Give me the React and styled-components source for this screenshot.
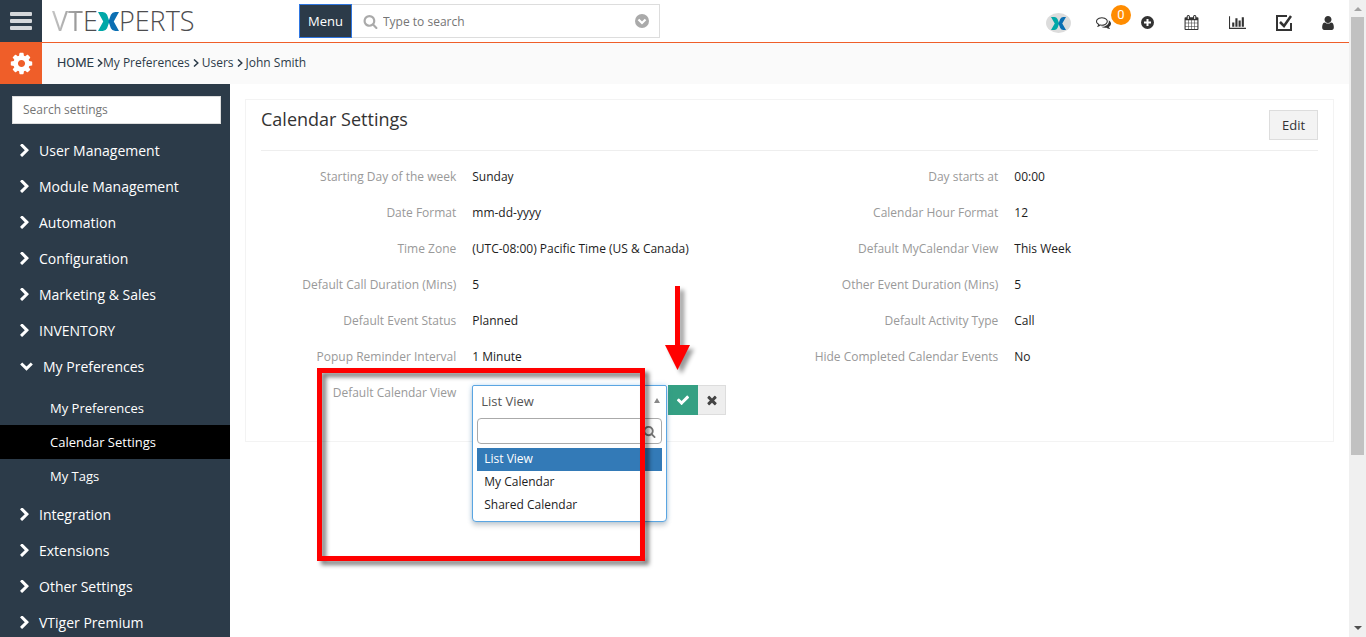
import React, { useState } from 'react';
import styled, { createGlobalStyle } from 'styled-components';

const GlobalStyle = createGlobalStyle`
  * {
    box-sizing: border-box;
  }

  body {
    margin: 0;
    background: #fff;
    color: #2c3b49;
    font-family: 'Open Sans', 'Noto Sans', sans-serif;
    font-size: 13px;
    line-height: 20px;
  }

  button, input, select {
    font-family: inherit;
    margin: 0;
  }
`;

const Page = styled.div`
  display: flex;
  height: 100vh;
  overflow: hidden;
`;

const Main = styled.div`
  display: flex;
  flex-direction: column;
  flex: 1;
  min-width: 0;
`;

const TopBar = styled.header`
  display: flex;
  height: 42px;
  flex-shrink: 0;
`;

const SquareButton = styled.button`
  display: flex;
  align-items: center;
  justify-content: center;
  width: 42px;
  padding: 0;
  border: none;
  flex-shrink: 0;
  background: ${props => props.$orange ? '#ef5e29' : '#2c3b49'};
  color: ${props => props.$orange ? '#fff' : '#d5d8db'};
  cursor: pointer;
`;

const Brand = styled.a`
  display: flex;
  align-items: center;
  width: 257px;
  padding-left: 10px;
  color: #4d4d4f;
  font-size: 27px;
  font-weight: 300;
  text-decoration: none;
`;

const BrandFade = styled.span`
  background: linear-gradient(90deg, #c4c4c4, #8f8f8f);
  background-clip: text;
  color: transparent;
  font-weight: 400;
`;

const MenuButton = styled.button`
  width: 53px;
  height: 34px;
  margin-top: 4px;
  padding: 0;
  border: 1px solid #2f76e0;
  background: #2c3b49;
  color: #fff;
  font-size: 13px;
  font-weight: 500;
  cursor: pointer;
`;

const GlobalSearch = styled.label`
  display: flex;
  align-items: center;
  gap: 5px;
  width: 308px;
  height: 34px;
  margin-top: 4px;
  padding: 0 10px 0 11px;
  border: 1px solid #ddd;
  border-left: none;
  color: #aaa;

  input {
    flex: 1;
    min-width: 0;
    padding: 0;
    border: none;
    outline: none;
    font-size: 12px;
  }
`;

const Tools = styled.nav`
  display: flex;
  align-items: center;
  margin-left: auto;
`;

const ToolButton = styled.button`
  position: relative;
  display: flex;
  padding: 3px ${props => props.$tight ? '10px' : '15px'} 0 15px;
  border: none;
  background: none;
  color: #333;
  cursor: pointer;
`;

const Badge = styled.span`
  position: absolute;
  top: -7px;
  right: -5px;
  width: 20px;
  height: 20px;
  border-radius: 50%;
  background: #ff8c00;
  color: #fff;
  font-family: Roboto, sans-serif;
  font-size: 13px;
  line-height: 20px;
  text-align: center;
`;

const CrumbBar = styled.div`
  display: flex;
  height: 42px;
  flex-shrink: 0;
`;

const Crumbs = styled.nav`
  display: flex;
  align-items: center;
  flex: 1;
  padding: 0 15px 2px;
  border-top: 1px solid #ef5e29;
  background: #fafafa;
  font-size: 12px;

  a {
    color: #2c3b49;
    text-decoration: none;
  }

  svg {
    margin: 0 3px;
  }

  svg:first-of-type {
    margin: 0;
  }
`;

const HomeLink = styled.a`
  margin-right: 3px;
  font-family: 'Liberation Sans Narrow', Roboto, sans-serif;
  font-size: 13px;
`;

const Body = styled.div`
  display: flex;
  flex: 1;
  min-height: 0;
`;

const Sidebar = styled.aside`
  width: 230px;
  flex-shrink: 0;
  padding-top: 12px;
  background: #2c3b49;
  overflow: hidden;
`;

const SettingsSearch = styled.input`
  display: block;
  width: 209px;
  height: 28px;
  margin: 0 0 8px 12px;
  padding: 0 10px 2px;
  border: 1px solid #ddd;
  background: #fff;
  font-size: 12px;
`;

const MenuItem = styled.button`
  display: flex;
  align-items: center;
  gap: 10px;
  width: 100%;
  height: 36px;
  padding: 0 20px;
  border: none;
  background: none;
  color: #fff;
  font-size: 14px;
  text-align: left;
  cursor: pointer;
`;

const SubMenu = styled.div`
  padding: 7px 0 3px;
`;

const SubItem = styled.a`
  display: block;
  padding: 0 50px;
  background: ${props => props.$active ? '#000' : 'transparent'};
  color: #fff;
  line-height: 34px;
  text-decoration: none;
`;

const Content = styled.main`
  flex: 1;
  min-width: 0;
  padding: 15px;
`;

const Panel = styled.section`
  padding: 10px 15px 26px;
  border: 1px solid #f3f3f3;
`;

const PanelHeader = styled.div`
  display: flex;
  align-items: flex-start;
  justify-content: space-between;
  padding-bottom: 10px;
  border-bottom: 1px solid #eee;
`;

const Title = styled.h1`
  margin: 0;
  color: #333;
  font-size: 18px;
  font-weight: 400;
  line-height: 18px;
`;

const EditButton = styled.button`
  width: 49px;
  height: 30px;
  padding: 0;
  border: 1px solid #ddd;
  background: #f3f3f3;
  color: #333;
  font-size: 13px;
  cursor: pointer;
`;

const Fields = styled.div`
  display: grid;
  grid-template-columns: 15fr 25fr 15fr 23fr;
  padding-top: 8px;
`;

const FieldLabel = styled.label`
  padding: 8px;
  color: #999;
  font-size: 12px;
  text-align: right;
`;

const FieldValue = styled.div`
  padding: 8px;
  color: #1d1d1d;
  font-size: 12px;
`;

const EditCell = styled.div`
  padding: 10px 8px 0;
`;

const Editor = styled.div`
  position: relative;
  display: flex;
  height: 30px;
`;

const SelectWrap = styled.div`
  position: relative;
  width: 196px;
`;

const Picker = styled.div`
  position: absolute;
  top: 0;
  left: 0;
  width: 195px;
  padding-bottom: 4px;
  border: 1px solid #5aa5e2;
  border-radius: 2px 2px 4px 4px;
  background: #fff;
  box-shadow: 0 4px 5px rgba(0, 0, 0, 0.15), 0 0 5px rgba(90, 165, 226, 0.4);
`;

const PickerSelect = styled.select`
  display: block;
  width: 100%;
  height: 30px;
  padding: 0 8px;
  border: none;
  outline: none;
  appearance: none;
  background: transparent;
  color: #555;
  font-size: 13px;
`;

const PickerArrow = styled.span`
  position: absolute;
  top: 12px;
  right: 6px;
  border: 3px solid transparent;
  border-top: none;
  border-bottom: 5px solid #888;
`;

const PickerSearch = styled.label`
  display: flex;
  align-items: center;
  height: 26px;
  margin: 2px 4px 4px;
  padding: 0 5px;
  border: 1px solid #aaa;
  border-radius: 4px;
  color: #777;

  input {
    flex: 1;
    min-width: 0;
    padding: 0;
    border: none;
    outline: none;
  }
`;

const OptionList = styled.ul`
  margin: 0 4px;
  padding: 0;
  list-style: none;
`;

const Option = styled.li`
  padding: 0 7px 2px;
  background: ${props => props.$active ? '#337ab7' : 'transparent'};
  color: ${props => props.$active ? '#fff' : '#1d1d1d'};
  font-size: 12px;
  line-height: 21px;
  cursor: pointer;
`;

const InlineButton = styled.button`
  display: flex;
  align-items: center;
  justify-content: center;
  width: ${props => props.$save ? '30px' : '28px'};
  padding: 0;
  border: 1px solid ${props => props.$save ? '#35a083' : '#ddd'};
  border-left: none;
  background: ${props => props.$save ? '#35a083' : '#eee'};
  color: ${props => props.$save ? '#fff' : '#444'};
  cursor: pointer;
`;

// callouts that lie over the form
const Callout = styled.div`
  position: absolute;
  top: -17px;
  left: -155px;
  width: 328px;
  height: 193px;
  border: 5px solid #f00;
  filter: drop-shadow(4px 4px 2px rgba(0, 0, 0, 0.5));
  pointer-events: none;
`;

const CalloutArrow = styled.svg`
  position: absolute;
  top: -99px;
  left: 193px;
  filter: drop-shadow(4px 4px 2px rgba(0, 0, 0, 0.4));
  pointer-events: none;
`;

const ScrollTrack = styled.div`
  display: flex;
  flex-direction: column;
  align-items: center;
  justify-content: space-between;
  width: 17px;
  flex-shrink: 0;
  padding: 7px 0;
  background: #f0f0f0;
`;

const ScrollThumb = styled.div`
  width: 13px;
  height: 438px;
  margin: 6px 0 auto;
  background: #c1c1c1;
`;

const ScrollArrow = styled.span`
  border: 4px solid transparent;
  border-${props => props.$down ? 'bottom' : 'top'}: none;
  border-${props => props.$down ? 'top' : 'bottom'}: 4px solid ${props => props.$down ? '#505050' : '#a3a3a3'};
`;

const paths = {
  search: 'M1216 832q0-185-131.5-316.5t-316.5-131.5-316.5 131.5-131.5 316.5 131.5 316.5 316.5 131.5 316.5-131.5 131.5-316.5zm512 832q0 52-38 90t-90 38q-54 0-90-38l-343-342q-179 124-399 124-143 0-273.5-55.5t-225-150-150-225-55.5-273.5 55.5-273.5 150-225 225-150 273.5-55.5 273.5 55.5 225 150 150 225 55.5 273.5q0 220-124 399l343 343q37 37 37 90z',
  comments: 'M704 384q-153 0-286 52t-211.5 141-78.5 191q0 82 53 158t149 132l97 56-35 84q34-20 62-39l44-31 53 10q78 14 153 14 153 0 286-52t211.5-141 78.5-191-78.5-191-211.5-141-286-52zm0-128q191 0 353.5 68.5t256.5 186.5 94 257-94 257-256.5 186.5-353.5 68.5q-86 0-176-16-124 88-278 128-36 9-86 16h-3q-11 0-20.5-8t-11.5-21q-1-3-1-6.5t.5-6.5 2-6l2.5-5 3.5-5.5 4-5 4.5-5 4-4.5q5-6 23-25t26-29.5 22.5-29 25-38.5 20.5-44q-124-72-195-177t-71-224q0-139 94-257t256.5-186.5 353.5-68.5zm822 1169q10 24 20.5 44t25 38.5 22.5 29 26 29.5 23 25q1 1 4 4.5t4.5 5 4 5 3.5 5.5l2.5 5 2 6 .5 6.5-1 6.5q-3 14-13 22t-22 7q-50-7-86-16-154-40-278-128-90 16-176 16-271 0-472-132 58 4 88 4 161 0 309-45t264-129q125-92 192-212t67-254q0-77-23-152 129 71 204 178t75 230q0 120-71 224.5t-195 176.5z',
  calendar: 'M192 1664h288v-288h-288v288zm352 0h320v-288h-320v288zm-352-352h288v-320h-288v320zm352 0h320v-320h-320v320zm-352-384h288v-288h-288v288zm736 736h320v-288h-320v288zm-384-736h320v-288h-320v288zm768 736h288v-288h-288v288zm-384-352h320v-320h-320v320zm-352-864v-288q0-13-9.5-22.5t-22.5-9.5h-64q-13 0-22.5 9.5t-9.5 22.5v288q0 13 9.5 22.5t22.5 9.5h64q13 0 22.5-9.5t9.5-22.5zm736 864h288v-320h-288v320zm-384-384h320v-288h-320v288zm384 0h288v-288h-288v288zm32-480v-288q0-13-9.5-22.5t-22.5-9.5h-64q-13 0-22.5 9.5t-9.5 22.5v288q0 13 9.5 22.5t22.5 9.5h64q13 0 22.5-9.5t9.5-22.5zm384-64v1280q0 52-38 90t-90 38h-1408q-52 0-90-38t-38-90v-1280q0-52 38-90t90-38h128v-96q0-66 47-113t113-47h64q66 0 113 47t47 113v96h384v-96q0-66 47-113t113-47h64q66 0 113 47t47 113v96h128q52 0 90 38t38 90z',
  chart: 'M640 896v512h-256v-512h256zm384-512v1024h-256v-1024h256zm1024 1152v128h-2048v-1536h128v1408h1920zm-640-896v768h-256v-768h256zm384-384v1152h-256v-1152h256z',
  user: 'M1536 1399q0 109-62.5 187t-150.5 78h-854q-88 0-150.5-78t-62.5-187q0-85 8.5-160.5t31.5-152 58.5-131 94-89 134.5-34.5q131 128 313 128t313-128q76 0 134.5 34.5t94 89 58.5 131 31.5 152 8.5 160.5zm-256-887q0 159-112.5 271.5t-271.5 112.5-271.5-112.5-112.5-271.5 112.5-271.5 271.5-112.5 271.5 112.5 112.5 271.5z',
  cog: 'M1152 896q0-106-75-181t-181-75-181 75-75 181 75 181 181 75 181-75 75-181zm512-109v222q0 12-8 23t-20 13l-185 28q-19 54-39 91 35 50 107 138 10 12 10 25t-9 23q-27 37-99 108t-94 71q-12 0-26-9l-138-108q-44 23-91 38-16 136-29 186-7 28-36 28h-222q-14 0-24.5-8.5t-11.5-21.5l-28-184q-49-16-90-37l-141 107q-10 9-25 9-14 0-25-11-126-114-165-168-7-10-7-23 0-12 8-23 15-21 51-66.5t54-70.5q-27-50-41-99l-183-27q-13-2-21-12.5t-8-23.5v-222q0-12 8-23t19-13l186-28q14-46 39-92-40-57-107-138-10-12-10-24 0-10 9-23 26-36 98.5-107.5t94.5-71.5q13 0 26 10l138 107q44-23 91-38 16-136 29-186 7-28 36-28h222q14 0 24.5 8.5t11.5 21.5l28 184q49 16 90 37l142-107q9-9 24-9 13 0 25 10 129 119 165 170 7 8 7 22 0 12-8 23-15 21-51 66.5t-54 70.5q26 50 41 98l183 28q13 2 21 12.5t8 23.5z',
  check: 'M1671 566q0 40-28 68l-724 724-136 136q-28 28-68 28t-68-28l-136-136-362-362q-28-28-28-68t28-68l136-136q28-28 68-28t68 28l294 295 656-657q28-28 68-28t68 28l136 136q28 28 28 68z',
  times: 'M1490 1322q0 40-28 68l-136 136q-28 28-68 28t-68-28l-294-294-294 294q-28 28-68 28t-68-28l-136-136q-28-28-28-68t28-68l294-294-294-294q-28-28-28-68t28-68l136-136q28-28 68-28t68 28l294 294 294-294q28-28 68-28t68 28l136 136q28 28 28 68t-28 68l-294 294 294 294q28 28 28 68z',
  right: 'M1363 877l-742 742q-19 19-45 19t-45-19l-166-166q-19-19-19-45t19-45l531-531-531-531q-19-19-19-45t19-45l166-166q19-19 45-19t45 19l742 742q19 19 19 45t-19 45z',
};

function Icon({ name, width, height, box = '0 0 1792 1792' }) {
  return (
    <svg width={width} height={height || width} viewBox={box} fill="currentColor" aria-hidden="true">
      <path d={paths[name]} />
    </svg>
  );
}

function Chevron({ open }) {
  if (open) {
    return (
      <svg width="13" height="9" viewBox="0 0 13 9" fill="none" stroke="currentColor" strokeWidth="3">
        <path d="M1.2 1.5 6.5 6.6 11.8 1.5" />
      </svg>
    );
  }
  return <Icon name="right" width={9} height={13} box="346 90 1036 1564" />;
}

function Separator() {
  return (
    <svg width="6" height="8" viewBox="0 0 6 8" fill="none" stroke="#2c3b49" strokeWidth="1.500" aria-hidden="true">
      <path d="M1 .5 4.800 4 1 7.500" />
    </svg>
  );
}

function BrandMark({ width, height, ...rest }) {
  return (
    <svg width={width} height={height} viewBox="0 0 22 20" preserveAspectRatio="none" aria-hidden="true" {...rest}>
      <path d="M0 0h5q3 0 4.500 3l2.500 7-2.500 7q-1.500 3-4.500 3h-5l5.500-10z" fill="#00a8a8" />
      <path d="M22 0h-4q-3 0-4.500 3l-2.500 7 2.500 7q1.500 3 4.500 3h4l-5.500-10z" fill="#0b6fb3" />
    </svg>
  );
}

const menu = [
  'User Management',
  'Module Management',
  'Automation',
  'Configuration',
  'Marketing & Sales',
  'INVENTORY',
  'My Preferences',
  'Integration',
  'Extensions',
  'Other Settings',
  'VTiger Premium',
];

const subMenu = ['My Preferences', 'Calendar Settings', 'My Tags'];

const crumbs = ['My Preferences', 'Users', 'John Smith'];

const fields = [
  ['Starting Day of the week', 'Sunday'],
  ['Day starts at', '00:00'],
  ['Date Format', 'mm-dd-yyyy'],
  ['Calendar Hour Format', '12'],
  ['Time Zone', '(UTC-08:00) Pacific Time (US & Canada)'],
  ['Default MyCalendar View', 'This Week'],
  ['Default Call Duration (Mins)', '5'],
  ['Other Event Duration (Mins)', '5'],
  ['Default Event Status', 'Planned'],
  ['Default Activity Type', 'Call'],
  ['Popup Reminder Interval', '1 Minute'],
  ['Hide Completed Calendar Events', 'No'],
];

const views = ['List View', 'My Calendar', 'Shared Calendar'];

function Header() {
  return (
    <TopBar>
      <SquareButton aria-label="Toggle menu">
        <svg width="22" height="18" viewBox="0 0 22 18" fill="currentColor">
          <rect width="22" height="4" rx="1" />
          <rect y="7" width="22" height="4" rx="1" />
          <rect y="14" width="22" height="4" rx="1" />
        </svg>
      </SquareButton>
      <Brand href="#">
        <BrandFade>VT</BrandFade>E<BrandMark width={21} height={19} />PERTS
      </Brand>
      <MenuButton>Menu</MenuButton>
      <GlobalSearch>
        <Icon name="search" width={15} />
        <input type="text" placeholder="Type to search" aria-label="Type to search" />
        <svg width="14" height="14" viewBox="0 0 14 14">
          <circle cx="7" cy="7" r="7" fill="#aaa" />
          <path d="M3.500 5.500 7 9l3.500-3.500" fill="none" stroke="#fff" strokeWidth="2.200" />
        </svg>
      </GlobalSearch>
      <Tools>
        <ToolButton $tight aria-label="VTExperts">
          <svg width="25" height="20" viewBox="0 0 25 20">
            <ellipse cx="12.500" cy="10" rx="12.500" ry="10" fill="#dcdcdc" />
            <BrandMark x="5" y="4" width={15} height={13} />
          </svg>
        </ToolButton>
        <ToolButton aria-label="Comments">
          <Icon name="comments" width={15} />
          <Badge>0</Badge>
        </ToolButton>
        <ToolButton aria-label="Quick create">
          <svg width="13" height="13" viewBox="0 0 13 13">
            <circle cx="6.500" cy="6.500" r="6.500" fill="currentColor" />
            <path d="M6.500 3v7M3 6.500h7" stroke="#fff" strokeWidth="2" />
          </svg>
        </ToolButton>
        <ToolButton aria-label="Calendar">
          <Icon name="calendar" width={15} />
        </ToolButton>
        <ToolButton aria-label="Reports">
          <Icon name="chart" width={17} height={15} box="0 0 2048 1792" />
        </ToolButton>
        <ToolButton aria-label="Tasks">
          <svg width="16" height="16" viewBox="0 0 16 16" fill="none" stroke="currentColor">
            <path d="M11 1H1v14h14V8" strokeWidth="2" />
            <path d="M4 7l4 4 7-10" strokeWidth="2.500" />
          </svg>
        </ToolButton>
        <ToolButton aria-label="Account">
          <Icon name="user" width={12} height={14} box="256 128 1280 1536" />
        </ToolButton>
      </Tools>
    </TopBar>
  );
}

function SideMenu() {
  return (
    <Sidebar>
      <SettingsSearch type="text" placeholder="Search settings" aria-label="Search settings" />
      {menu.map(item => (
        <React.Fragment key={item}>
          <MenuItem>
            <Chevron open={item === 'My Preferences'} />
            {item}
          </MenuItem>
          {item === 'My Preferences' && (
            <SubMenu>
              {subMenu.map(sub => (
                <SubItem key={sub} href="#" $active={sub === 'Calendar Settings'}>{sub}</SubItem>
              ))}
            </SubMenu>
          )}
        </React.Fragment>
      ))}
    </Sidebar>
  );
}

function ViewEditor() {
  const [view, setView] = useState('List View');

  return (
    <Editor>
      <SelectWrap>
        <Picker>
          <PickerSelect id="calendar-view" value={view} onChange={e => setView(e.target.value)}>
            {views.map(v => <option key={v}>{v}</option>)}
          </PickerSelect>
          <PickerArrow />
          <PickerSearch>
            <input type="text" aria-label="Filter views" />
            <Icon name="search" width={13} />
          </PickerSearch>
          <OptionList>
            {views.map(v => (
              <Option key={v} $active={v === view} onClick={() => setView(v)}>{v}</Option>
            ))}
          </OptionList>
        </Picker>
      </SelectWrap>
      <InlineButton $save aria-label="Save">
        <Icon name="check" width={14} />
      </InlineButton>
      <InlineButton aria-label="Cancel">
        <Icon name="times" width={14} />
      </InlineButton>
      <Callout />
      <CalloutArrow width="25" height="84" viewBox="0 0 25 84" fill="#f00">
        <path d="M10 0h5v59h10L12.500 84 0 59h10z" />
      </CalloutArrow>
    </Editor>
  );
}

function App() {
  return (
    <>
      <GlobalStyle />
      <Page>
        <Main>
          <Header />
          <CrumbBar>
            <SquareButton $orange aria-label="Settings">
              <Icon name="cog" width={25} />
            </SquareButton>
            <Crumbs>
              <HomeLink href="#">HOME</HomeLink>
              {crumbs.map(crumb => (
                <React.Fragment key={crumb}>
                  <Separator />
                  <a href="#">{crumb}</a>
                </React.Fragment>
              ))}
            </Crumbs>
          </CrumbBar>
          <Body>
            <SideMenu />
            <Content>
              <Panel>
                <PanelHeader>
                  <Title>Calendar Settings</Title>
                  <EditButton>Edit</EditButton>
                </PanelHeader>
                <Fields>
                  {fields.map(([label, value]) => (
                    <React.Fragment key={label}>
                      <FieldLabel as="div">{label}</FieldLabel>
                      <FieldValue>{value}</FieldValue>
                    </React.Fragment>
                  ))}
                  <FieldLabel htmlFor="calendar-view">Default Calendar View</FieldLabel>
                  <EditCell>
                    <ViewEditor />
                  </EditCell>
                </Fields>
              </Panel>
            </Content>
          </Body>
        </Main>
        <ScrollTrack>
          <ScrollArrow />
          <ScrollThumb />
          <ScrollArrow $down />
        </ScrollTrack>
      </Page>
    </>
  );
}

export default App;
